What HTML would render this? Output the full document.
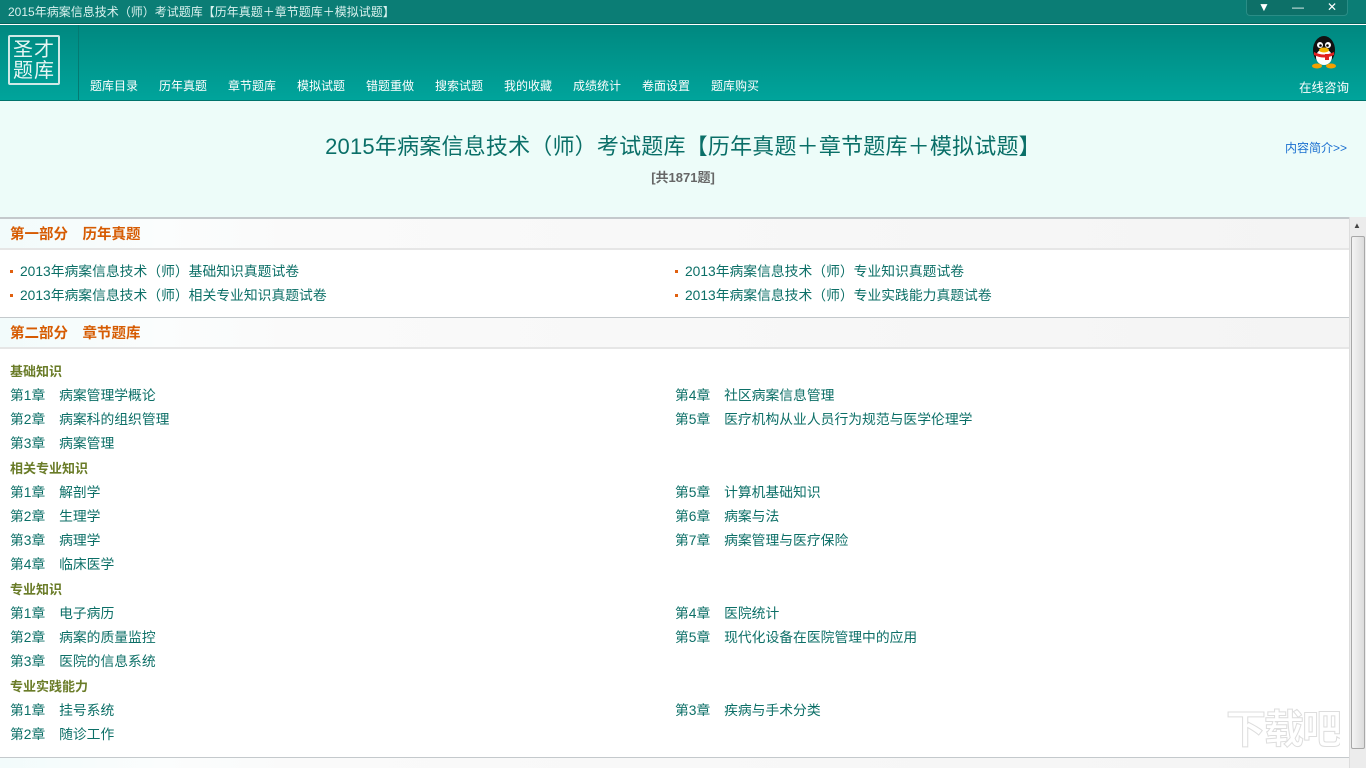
<!DOCTYPE html>
<html style="overflow:hidden;height:768px"><head><meta charset="utf-8"><style>
*{margin:0;padding:0;box-sizing:border-box}
body{width:1366px;height:768px;overflow:hidden;background:#fff;font-family:"Liberation Sans","Noto Sans CJK SC","WenQuanYi Zen Hei",sans-serif;position:relative}
.tb{position:absolute;left:0;top:0;width:1366px;height:24px;background:#0b7d75;color:#d9f1ee;font-size:12px;line-height:24px;padding-left:8px;border-bottom:1px solid #05655e}
.wb{position:absolute;right:18px;top:0;width:102px;height:16px;background:#0d7068;border-radius:0 0 4px 4px;border:1px solid #2a8d86;border-top:none;color:#fff;font-size:12px}
.wb span{position:absolute;top:0;width:34px;text-align:center;line-height:14px}
.nav{position:absolute;left:0;top:25px;width:1366px;height:76px;background:linear-gradient(#008880,#00a49b);border-bottom:1px solid #00746c}
.logo{position:absolute;left:8px;top:10px;width:52px;height:50px;border:2px solid #cfe9e6;border-radius:2px;color:#e6f6f4;font-size:20px;line-height:21px;text-align:center;padding-top:3px;letter-spacing:1px}
.sep{position:absolute;left:78px;top:0;width:1px;height:76px;background:#047a72}
.menu{position:absolute;left:90px;top:52px;color:#fff;font-size:12px}
.menu span{position:absolute;top:0;white-space:nowrap}
.qq{position:absolute;left:1299px;top:52px;color:#fff;font-size:12.5px}
.hd{position:absolute;left:0;top:101px;width:1366px;height:116px;background:#edfcf9}
.t1{position:absolute;left:0;width:1366px;top:129px;text-align:center;font-size:22px;color:#0a6f68;letter-spacing:0.2px}
.t2{position:absolute;left:0;width:1366px;top:167px;text-align:center;font-size:13px;font-weight:bold;color:#666}
.intro{position:absolute;left:1285px;top:139px;font-size:12px;color:#1a6fd0}
.content{position:absolute;left:0;top:217px;width:1349px;height:551px;border-top:2px solid #c4c9cc}
.sh{position:absolute;left:0;width:1349px;height:31px;background:linear-gradient(90deg,#f2fbfb 0,#fbfdfd 160px,#fafafa 300px,#f4f4f4);border-bottom:2px solid #e6e6e6;color:#d65b02;font-weight:bold;font-size:14.5px;line-height:30px;padding-left:10px;padding-top:1px}
.line{position:absolute;left:0;width:1349px;height:1px;background:#c4c9cc}
.r{position:absolute;font-size:13.8px;color:#0c6f67;white-space:nowrap;line-height:18px}
.b{position:absolute;width:3px;height:3px;background:#e06010}
.s{position:absolute;left:10px;font-size:13px;font-weight:bold;color:#6a7c28;line-height:18px}
.sb{position:absolute;left:1349px;top:217px;width:17px;height:551px;background:#ececec;border-left:1px solid #ddd}
.thumb{position:absolute;left:1351px;top:236px;width:14px;height:513px;background:linear-gradient(90deg,#f4f4f4,#dcdcdc);border:1px solid #a8a8a8;border-radius:2px}
</style></head><body>
<div class="tb">2015年病案信息技术（师）考试题库【历年真题＋章节题库＋模拟试题】</div>
<div class="wb"><span style="left:0">▼</span><span style="left:34px">—</span><span style="left:68px">✕</span></div>
<div class="nav">
<div class="logo">圣才<br>题库</div>
<div class="sep"></div>
<div class="menu"><span style="left:0">题库目录</span><span style="left:69px">历年真题</span><span style="left:138px">章节题库</span><span style="left:207px">模拟试题</span><span style="left:276px">错题重做</span><span style="left:345px">搜索试题</span><span style="left:414px">我的收藏</span><span style="left:483px">成绩统计</span><span style="left:552px">卷面设置</span><span style="left:621px">题库购买</span></div>
<svg style="position:absolute;left:1306px;top:8px" width="36" height="36" viewBox="0 0 36 36"><ellipse cx="18" cy="17" rx="11" ry="14" fill="#111"/><ellipse cx="18" cy="24" rx="8" ry="8" fill="#fff"/><circle cx="14" cy="12" r="3" fill="#fff"/><circle cx="22" cy="12" r="3" fill="#fff"/><circle cx="14.5" cy="12.5" r="1.3" fill="#000"/><circle cx="21.5" cy="12.5" r="1.3" fill="#000"/><ellipse cx="18" cy="17" rx="5" ry="2.5" fill="#f4b400"/><path d="M8 19 Q18 24 28 19 L28 22 Q18 27 8 22Z" fill="#e02020"/><rect x="19" y="21" width="4" height="6" fill="#e02020"/><ellipse cx="11" cy="33" rx="5" ry="2.5" fill="#f4a000"/><ellipse cx="25" cy="33" rx="5" ry="2.5" fill="#f4a000"/></svg>
<div class="qq">在线咨询</div>
</div>
<div class="hd"></div>
<div class="t1">2015年病案信息技术（师）考试题库【历年真题＋章节题库＋模拟试题】</div>
<div class="t2">[共1871题]</div>
<div class="intro">内容简介&gt;&gt;</div>
<div class="content"></div>
<div class="sh" style="top:219px">第一部分　历年真题</div>
<div class="b" style="left:10px;top:270px"></div><div class="r" style="left:20px;top:263px">2013年病案信息技术（师）基础知识真题试卷</div>
<div class="b" style="left:675px;top:270px"></div><div class="r" style="left:685px;top:263px">2013年病案信息技术（师）专业知识真题试卷</div>
<div class="b" style="left:10px;top:294px"></div><div class="r" style="left:20px;top:287px">2013年病案信息技术（师）相关专业知识真题试卷</div>
<div class="b" style="left:675px;top:294px"></div><div class="r" style="left:685px;top:287px">2013年病案信息技术（师）专业实践能力真题试卷</div>
<div class="line" style="top:317px"></div>
<div class="sh" style="top:318px">第二部分　章节题库</div>

<div class="s" style="top:363px">基础知识</div>
<div class="r" style="left:10px;top:387px">第1章　病案管理学概论</div><div class="r" style="left:675px;top:387px">第4章　社区病案信息管理</div>
<div class="r" style="left:10px;top:411px">第2章　病案科的组织管理</div><div class="r" style="left:675px;top:411px">第5章　医疗机构从业人员行为规范与医学伦理学</div>
<div class="r" style="left:10px;top:435px">第3章　病案管理</div>
<div class="s" style="top:460px">相关专业知识</div>
<div class="r" style="left:10px;top:484px">第1章　解剖学</div><div class="r" style="left:675px;top:484px">第5章　计算机基础知识</div>
<div class="r" style="left:10px;top:508px">第2章　生理学</div><div class="r" style="left:675px;top:508px">第6章　病案与法</div>
<div class="r" style="left:10px;top:532px">第3章　病理学</div><div class="r" style="left:675px;top:532px">第7章　病案管理与医疗保险</div>
<div class="r" style="left:10px;top:556px">第4章　临床医学</div>
<div class="s" style="top:581px">专业知识</div>
<div class="r" style="left:10px;top:605px">第1章　电子病历</div><div class="r" style="left:675px;top:605px">第4章　医院统计</div>
<div class="r" style="left:10px;top:629px">第2章　病案的质量监控</div><div class="r" style="left:675px;top:629px">第5章　现代化设备在医院管理中的应用</div>
<div class="r" style="left:10px;top:653px">第3章　医院的信息系统</div>
<div class="s" style="top:678px">专业实践能力</div>
<div class="r" style="left:10px;top:702px">第1章　挂号系统</div><div class="r" style="left:675px;top:702px">第3章　疾病与手术分类</div>
<div class="r" style="left:10px;top:726px">第2章　随诊工作</div>
<div class="line" style="top:757px"></div>
<div class="sh" style="top:758px;padding-top:8px;height:10px;overflow:hidden;border:none">第三部分　模拟试题</div>
<div class="sb"></div>
<div style="position:absolute;left:1353px;top:221px;font-size:8px;color:#444">▲</div>
<div class="thumb"></div>
<div style="position:absolute;left:1226px;top:705px;font-size:40px;font-weight:bold;color:transparent;-webkit-text-stroke:1px #ddd;letter-spacing:-2px;line-height:50px;height:63px;overflow:hidden">下载吧</div>
</body></html>
